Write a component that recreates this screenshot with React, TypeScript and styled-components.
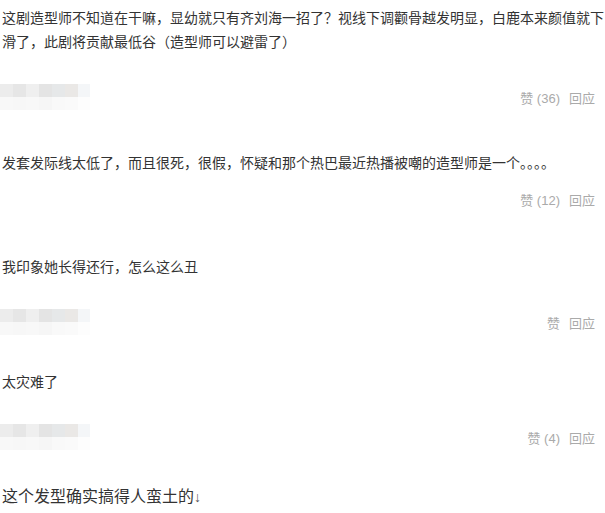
import React from "react";
import styled, { createGlobalStyle } from "styled-components";

const Global = createGlobalStyle`
  html, body { margin: 0; padding: 0; background: #fff; }
  body { font-family: "Microsoft YaHei", "Noto Sans CJK SC", "Noto Sans", sans-serif; }
`;

const Page = styled.div`
  width: 605px;
  height: 513px;
  overflow: hidden;
  padding-left: 2px;
  box-sizing: border-box;
  display: flex;
  flex-direction: column;
`;

const Comment = styled.div<{ $top: number }>`
  display: flex;
  flex-direction: column;
  margin-top: ${(p) => p.$top}px;
`;

const Text = styled.div`
  font-size: 14px;
  line-height: 24px;
  color: #333;
  word-break: break-all;
`;

const Meta = styled.div<{ $gap: number }>`
  display: flex;
  align-items: center;
  justify-content: space-between;
  height: 24px;
  margin-top: ${(p) => p.$gap}px;
  margin-left: -2px;
  padding-right: 10px;
`;

const Actions = styled.div`
  display: flex;
  gap: 9px;
  font-size: 13px;
  color: #aaa;
  font-family: "Liberation Sans", "Noto Sans CJK SC", sans-serif;
`;

const Final = styled.div<{ $top: number }>`
  margin-top: ${(p) => p.$top}px;
  font-size: 16px;
  line-height: 24px;
  color: #333;
`;

const Arrow = styled.span`
  font-family: "Liberation Sans", sans-serif;
  font-size: 14px;
  color: #555;
`;

const mosaicColors = [
  ["#ececec", "#e6e6e6", "#efefef", "#e4e4e4", "#e6e8e9", "#eae8e6", "#f4f6f8"],
  ["#f8f8f8", "#f7f7f7", "#f8f8f8", "#f6f6f6", "#f9f9f9", "#fafafa", "#fdfdfd"],
];

const Mosaic = ({ show }: { show: boolean }) => (
  <svg width="90" height="26" viewBox="0 0 90 26">
    {show &&
      mosaicColors.map((row, r) =>
        row.map((c, i) => (
          <rect key={`${r}-${i}`} x={i * 13} y={r * 13} width="13" height="13" fill={c} />
        ))
      )}
  </svg>
);

type Item = { text: string; likes?: number; top: number; gap: number; mosaic: boolean };

const items: Item[] = [
  {
    text: "这剧造型师不知道在干嘛，显幼就只有齐刘海一招了？视线下调颧骨越发明显，白鹿本来颜值就下滑了，此剧将贡献最低谷（造型师可以避雷了）",
    likes: 36,
    top: 5,
    gap: 32,
    mosaic: true,
  },
  {
    text: "发套发际线太低了，而且很死，很假，怀疑和那个热巴最近热播被嘲的造型师是一个。。。。",
    likes: 12,
    top: 41,
    gap: 13,
    mosaic: false,
  },
  { text: "我印象她长得还行，怎么这么丑", top: 43, gap: 32, mosaic: true },
  { text: "太灾难了", likes: 4, top: 35, gap: 32, mosaic: true },
];

export default function App() {
  return (
    <>
      <Global />
      <Page>
        {items.map((it, i) => (
          <Comment key={i} $top={it.top}>
            <Text>{it.text}</Text>
            <Meta $gap={it.gap}>
              <Mosaic show={it.mosaic} />
              <Actions>
                <span>{it.likes !== undefined ? `赞 (${it.likes})` : "赞"}</span>
                <span>回应</span>
              </Actions>
            </Meta>
          </Comment>
        ))}
        <Final $top={34}>
          这个发型确实搞得人蛮土的<Arrow>↓</Arrow>
        </Final>
      </Page>
    </>
  );
}
